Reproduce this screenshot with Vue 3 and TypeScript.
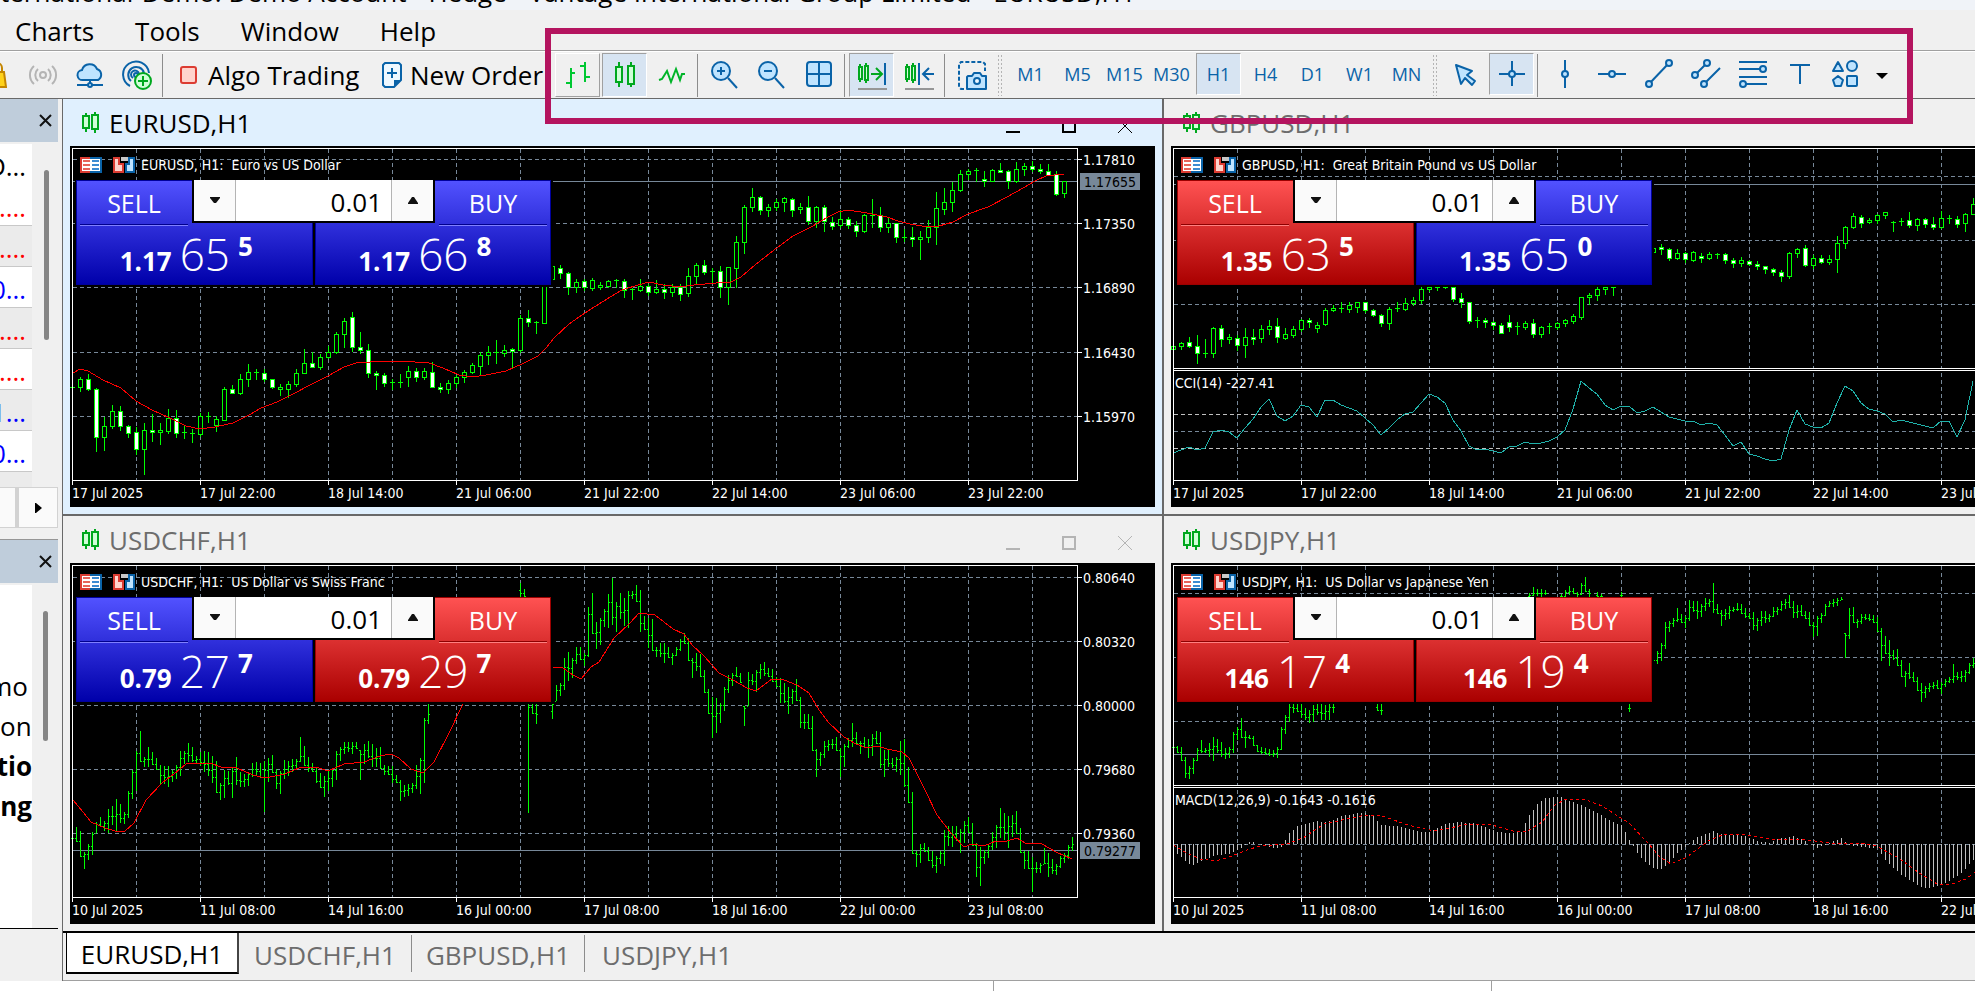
<script setup lang="ts">
import { ref } from 'vue'

type Tone = 'up' | 'down'
interface Quote { base: string; pips: string; point: string; tone: Tone }
interface Candle { x: number; high: number; top: number; bottom: number; low: number; falling: boolean }
interface Level { y: number; label: string }
interface ChartWindow {
  symbol: string
  caption: string
  active: boolean
  controls: boolean
  sell: Quote
  buy: Quote
  grid: Level[]
  priceY: number
  priceLabel: string
  dates: string[]
  split: number
  candles: Candle[]
  bars: string
  average: string
  indicator: string
  indicatorKind: '' | 'cci' | 'macd'
  indicatorY: number
  curve: string
  histogram: string
}

const volume = ref<Record<string, string>>({ EURUSD: '0.01', GBPUSD: '0.01', USDCHF: '0.01', USDJPY: '0.01' })

/* Each candle is "high top bottom low", followed by d for a falling one. */
function candles(text: string, start = 0): Candle[] {
  return text.trim().split(/\s*,\s*/).map((item, i) => {
    const p = item.split(' ')
    return { x: 2 + (start + i) * 8, high: +p[0], top: +p[1], bottom: +p[2], low: +p[3], falling: p[4] === 'd' }
  })
}

/* Groups of "index:high low,high low" become vertical bars with open and close ticks. */
function bars(text: string): string {
  let path = ''
  for (const group of text.trim().split(/\s*;\s*/)) {
    const [start, list] = group.split(':')
    const pairs = list.split(',').map(p => p.trim().split(' ').map(Number))
    let close = Math.round((pairs[0][0] + pairs[0][1]) / 2)
    pairs.forEach(([high, low], i) => {
      const x = 2 + (Number(start) + i) * 4
      const open = Math.min(Math.max(close, high), low)
      const next = pairs[i + 1] ?? pairs[i]
      close = Math.min(Math.max(Math.round((next[0] + next[1]) / 2), high + 2), low - 1)
      path += `M${x}.5 ${high}V${low}M${x - 1} ${open}.5H${x}M${x + 1} ${close}.5H${x + 2}`
    })
  }
  return path
}

/* Vertical strokes from the zero line, interpolated between "index y" pairs. */
function histogram(text: string, zero: number): string {
  const keys = text.trim().split(/\s*,\s*/).map(p => p.split(' ').map(Number))
  let path = ''
  for (let k = 0; k < keys.length - 1; k++) {
    const [a, ya] = keys[k]
    const [b, yb] = keys[k + 1]
    for (let i = a; i < b; i++) {
      const y = Math.round(ya + ((yb - ya) * (i - a)) / (b - a))
      if (y !== zero) path += `M${2 + i * 4}.5 ${zero}V${y}`
    }
  }
  return path
}

const eurusd = candles(`240 241 242 242,231 233 241 245,228 233 243 244 d,242 243 291 305 d,271 280 291 304,259 265 280 282,260 265 280 284 d,279 280 287 291 d,281 286 303 308 d,277 284 303 328,268 284 286 295 d,277 284 286 298,263 272 285 287,264 272 287 291 d,280 286 287 292,283 287 288 296,267 270 288 290,266 270 271 276,270 273 279 285,241 243 274 274,239 243 247 247 d,228 233 247 248,218 226 233 240,223 226 227 233,223 227 233 235 d,233 233 241 242 d,238 241 243 249,235 238 243 251,223 227 238 240,203 217 227 227,206 217 221 221 d,208 211 221 223,200 206 211 212,186 188 206 207,172 175 188 201,166 171 201 205 d,186 201 204 207 d,198 204 227 231 d,225 227 229 243 d,227 229 237 240 d,233 236 237 243,228 236 237 241,220 225 231 240,222 225 231 235 d,222 225 231 233,216 226 241 241 d,237 241 243 246 d,234 237 243 247,229 231 237 241,224 226 231 236,217 219 226 227,206 209 220 228,200 206 209 218,194 206 207 217,199 204 207 210,202 203 205 221 d,169 172 204 206,164 172 176 180 d,175 176 177 187,137 137 177 177,120 120 133 134,119 122 127 132 d,126 127 141 148 d,133 136 141 146,133 135 141 144 d,132 134 142 144,136 139 141 143,134 135 140 141,133 134 135 141,133 135 144 151 d,142 143 144 153,133 140 144 145,138 140 146 149 d,134 143 146 147,138 143 146 152 d,138 141 146 150,138 141 148 154 d,122 130 147 150,117 119 130 137,114 119 126 128 d,122 125 126 136,120 125 141 151 d,121 121 141 158,90 96 122 141,59 61 96 107,42 51 61 65,50 51 64 68 d,58 61 64 70,53 56 61 64,51 52 56 65,52 53 64 70 d,57 61 63 67,50 61 75 78 d,60 61 75 81,59 61 75 85 d,71 76 80 83 d,64 73 79 81,71 73 79 82 d,75 79 85 90 d,68 69 85 86,53 69 70 81,61 69 81 85 d,71 77 81 86,77 77 91 96 d,83 91 92 95,81 91 93 100 d,85 91 93 113,74 81 91 96,46 62 81 98,42 56 63 68,36 44 56 65,24 28 44 45,23 25 28 33,22 24 25 35,25 33 35 40 d,23 24 35 35,17 24 26 26 d,24 25 35 42 d,16 23 35 36,17 20 23 29,15 20 23 25 d,18 23 25 27 d,18 25 29 29 d,25 28 48 49 d,35 35 47 51`)

const gbpusd = candles(`199 200 203 203,196 197 200 203,191 196 200 201 d,189 200 207 217 d,193 207 208 211,181 182 207 211,179 182 193 200 d,188 191 193 197,189 192 199 204 d,182 191 199 211,183 191 193 198 d,179 183 192 196,174 180 183 188,172 180 191 196 d,182 188 192 193,180 183 189 191,173 174 183 185,172 174 176 181 d,176 179 182 186,162 164 178 179,159 162 164 165,156 162 163 166,156 159 163 166,156 156 161 166,156 156 164 166 d,163 164 169 170 d,168 169 177 180 d,161 163 177 183,156 162 163 165,152 157 163 164,151 154 157 159,141 143 154 157,140 141 143 145,137 139 141 144,134 136 141 142,139 141 153 155 d,147 152 156 161 d,156 156 175 177 d,171 174 175 181,172 174 176 181 d,175 176 179 183 d,177 179 187 187 d,169 176 181 185 d,176 180 181 188,175 177 181 183,173 177 188 191 d,180 181 188 191,177 180 181 187,176 177 181 183,173 174 177 180,168 170 175 177,151 151 171 173,147 149 151 158,141 143 149 154,141 141 143 148,137 139 141 149,120 124 139 140,110 116 124 130,106 108 116 120,102 104 108 111,102 102 106 107,98 101 103 108 d,102 103 112 114 d,103 107 112 113,106 107 113 116 d,105 106 114 115,107 110 112 116 d,106 108 112 113,107 108 109 112,107 108 114 117 d,112 114 117 121 d,111 114 117 120,114 115 118 119 d,115 118 120 123 d,120 120 123 127 d,122 123 126 129 d,124 126 130 135 d,106 107 130 132,102 103 107 111,99 102 119 120 d,109 112 119 122,109 112 116 117 d,109 113 116 118,90 97 113 126,80 81 97 102,67 70 81 82,69 71 77 81 d,72 74 76 77,68 69 74 77,66 66 69 72,75 76 77 85,72 75 76 79,66 74 79 81 d,72 73 79 84,72 73 78 81 d,71 78 81 83 d,65 72 81 82,69 72 73 77,70 73 78 81 d,67 68 77 85,52 58 68 68`)

const usdchf = bars(`0:273 276,264 279,268 294,289 306,281 297,269 292,259 270,254 264,258 268,246 270,243 262,236 269,241 260,249 261,228 255,207 236,188 228,168 199,194 204,184 204,189 202,195 207,202 221,203 221,203 224,207 219,202 216,188 213,188 201,180 199,184 199,193 200,189 203,188 209,189 213,193 220,198 230,220 237,207 235,208 222,204 235,194 222,209 224,211 224,209 223,200 214,199 212,200 215,198 249,195 219,192 210,206 226,208 231,197 216,198 213,196 209,196 207,174 199,183 203,194 209,200 209,205 220,210 225,213 234,207 228,205 224,188 217,184 198,179 191,179 189,179 191,179 186,187 217,181 201,178 195,181 204,185 204,184 206,202 212,203 212,203 220,212 220,217 238,222 234,221 233,220 230,202 226,195 231,155 220,140 161;112:20 34,26 34,137 250,137 151,140 161;120:139 156,122 138,120 133,95 127,89 118,95 115,84 101,84 97,90 103,44 94,30 71,59 86,55 82,46 64,31 65,15 62,39 69,30 56,35 63,28 65,28 36,22 39,27 69,53 67,55 85,56 88,84 94,80 94,80 100,84 95,90 102,84 93,76 88,70 81,75 98,95 115,90 108,91 114,107 130,126 151,134 175,135 170,140 160,124 148,112 130,110 123,104 114,110 120,143 163,109 143,111 122,107 129,101 116,99 113,105 114,106 119,114 124,115 140,120 140,124 151,126 141,116 138,134 165,151 166,151 166,153 188,186 214,189 203,178 195,177 188,176 186,174 188,185 214,181 204,175 185,160 184,169 181,178 191,174 185,176 195,171 193,168 181,169 205,187 214,187 204,195 205,194 209,178 212,176 224,204 240,229 291,288 304,281 300,280 289,284 298,288 305,293 310,288 301,267 303,263 283,263 284,263 278,266 290,258 280,254 270,260 283,280 314,284 323,287 301,281 295,269 287,262 285,245 275,250 277,253 285,252 274,248 271,265 290,288 306,288 306,294 329,299 310,300 310,285 301,290 314,296 311,301 312,293 305,290 300,282 296,274 288`)

const usdjpy = bars(`0:183 185,183 190,184 198,194 215,203 216,195 211,185 198,177 190,185 190,180 194,174 198,176 190,179 194,185 196,184 195,169 190,164 177,155 175,168 185,172 176,173 183,182 189,184 191,185 192,186 193,187 194,184 195,164 187,152 171,140 159,137 150,140 149,141 155,145 157,147 160,142 159,140 152,140 157,142 157,139 157,137 150;51:140 148,141 152;89:30 35,24 33,26 33,26 34,27 32;97:31 34,27 34,23 32,25 31,29 34,20 32,14 29,26 34;106:29 34,31 34;112:29 35;114:140 149;120:95 99,88 101,80 98,59 86,58 69,55 64,45 59,51 60,53 65,37 58,38 49,38 56,41 54,35 48,36 44,20 50,41 51,47 63,46 57,43 56,44 49,40 48,41 51,45 55,50 56,49 67,55 68,48 63,48 60,51 59,44 54,44 52,38 48,36 46,32 45,38 55,42 55,42 53,48 56,49 63,59 74,53 73,50 60,41 53,38 44,36 44,35 43,34 37,70 95,45 76,44 60,56 65,51 61,51 57,51 58,52 60,54 69,65 98,73 91,77 103,87 97,86 103,97 114,108 124,100 116,109 119,114 128,120 139,123 135,120 129,119 126,117 126,119 131,116 124,114 120,101 120,109 117,108 119,107 119,100 111,95 105`)

const eurAverage = '3,227 10,223 18,225 33,234 51,242 66,255 82,264 100,272 116,280 130,283 145,281 163,277 179,269 191,262 207,256 223,248 242,238 258,230 274,221 286,217 300,216 317,215 345,216 359,217 373,222 389,229 403,231 416,229 436,225 452,218 468,210 476,202 484,192 499,178 509,171 521,163 537,153 552,144 568,139 579,136 593,139 611,141 624,139 646,137 661,136 671,131 685,119 704,104 723,90 743,80 758,71 768,66 778,64 797,67 817,71 828,75 840,78 858,81 869,80 883,76 898,68 918,61 937,51 953,42 965,35 976,30 994,28'
const chfAverage = '3,237 13,249 21,259 35,265 45,268 55,268 64,260 76,237 92,220 104,211 116,201 140,200 151,204 167,205 183,212 195,215 215,211 231,204 246,204 258,208 274,201 294,199 310,193 321,191 329,195 341,206 353,210 364,199 379,170 393,141 430,100 482,104 493,105 503,112 511,116 521,104 529,99 544,75 560,60 569,50 585,52 603,66 614,71 622,82 634,93 649,110 663,117 677,125 686,128 702,116 714,117 727,122 739,130 749,147 758,159 774,174 786,181 797,185 807,183 817,186 832,189 839,195 856,229 867,252 881,270 894,284 902,281 914,283 926,278 937,278 947,275 955,280 972,281 986,289 1002,296'
const cci = [307, 304, 301, 304, 302, 286, 284, 286, 292, 282, 273, 261, 253, 270, 275, 270, 259, 261, 271, 254, 254, 259, 262, 265, 272, 279, 289, 282, 274, 268, 266, 257, 248, 251, 257, 274, 285, 300, 304, 303, 305, 307, 301, 300, 296, 298, 297, 295, 291, 284, 263, 235, 242, 248, 259, 264, 260, 260, 267, 265, 261, 266, 271, 273, 275, 275, 279, 277, 279, 289, 300, 296, 308, 310, 313, 315, 313, 284, 264, 278, 281, 282, 277, 257, 240, 245, 257, 263, 265, 268, 276, 274, 276, 278, 280, 282, 275, 275, 291, 274, 235]
  .map((y, i) => `${2 + i * 8},${y}`).join(' ')
const signal = '2,282 16,290 29,296 45,298 58,294 76,287 89,283 116,281 132,275 153,261 176,256 195,252 211,253 237,262 263,268 279,265 297,261 321,262 342,268 355,269 371,259 384,242 395,236 413,236 431,243 458,260 476,279 489,294 500,301 516,294 537,278 553,271 576,272 605,277 629,276 658,280 689,280 705,283 726,294 747,309 766,321 781,321 795,316 804,309'
const macd = histogram('0 281,1 291,4 301,5 302,8 296,11 292,14 291,16 287,18 282,19 279,20 279,22 282,25 285,27 284,28 277,29 270,31 263,34 260,36 258,38 259,40 257,42 253,46 250,48 250,50 253,52 262,56 263,62 269,64 269,68 261,71 259,75 260,78 264,81 269,84 270,87 269,88 260,89 252,91 241,93 235,95 234,97 234,99 238,102 242,106 250,110 259,112 262,113 269,114 277,115 283,116 290,118 299,120 305,122 306,124 300,126 290,128 284,129 280,131 274,135 268,137 271,143 273,146 278,149 280,151 276,155 273,158 278,160 283,161 285,164 280,167 275,169 282,172 284,176 285,178 297,182 312,187 324,189 325,193 320,197 310,200 297,202 290', 281)

const julyDates = ['17 Jul 2025', '17 Jul 22:00', '18 Jul 14:00', '21 Jul 06:00', '21 Jul 22:00', '22 Jul 14:00', '23 Jul 06:00', '23 Jul 22:00']
const longDates = ['10 Jul 2025', '11 Jul 08:00', '14 Jul 16:00', '16 Jul 00:00', '17 Jul 08:00', '18 Jul 16:00', '22 Jul 00:00', '23 Jul 08:00']

const windows: ChartWindow[] = [
  {
    symbol: 'EURUSD', caption: 'EURUSD, H1:  Euro vs US Dollar', active: true, controls: true,
    sell: { base: '1.17', pips: '65', point: '5', tone: 'up' }, buy: { base: '1.17', pips: '66', point: '8', tone: 'up' },
    grid: [{ y: 13, label: '1.17810' }, { y: 77, label: '1.17350' }, { y: 141, label: '1.16890' }, { y: 206, label: '1.16430' }, { y: 270, label: '1.15970' }],
    priceY: 35, priceLabel: '1.17655', dates: julyDates, split: 0, candles: eurusd, bars: '', average: eurAverage,
    indicator: '', indicatorKind: '', indicatorY: 0, curve: '', histogram: '',
  },
  {
    symbol: 'GBPUSD', caption: 'GBPUSD, H1:  Great Britain Pound vs US Dollar', active: false, controls: false,
    sell: { base: '1.35', pips: '63', point: '5', tone: 'down' }, buy: { base: '1.35', pips: '65', point: '0', tone: 'up' },
    grid: [{ y: 30, label: '' }, { y: 94, label: '' }, { y: 158, label: '' }],
    priceY: 38, priceLabel: '', dates: julyDates.slice(0, 7), split: 222, candles: gbpusd, bars: '', average: '',
    indicator: 'CCI(14) -227.41', indicatorKind: 'cci', indicatorY: 242, curve: cci, histogram: '',
  },
  {
    symbol: 'USDCHF', caption: 'USDCHF, H1:  US Dollar vs Swiss Franc', active: false, controls: true,
    sell: { base: '0.79', pips: '27', point: '7', tone: 'up' }, buy: { base: '0.79', pips: '29', point: '7', tone: 'down' },
    grid: [{ y: 14, label: '0.80640' }, { y: 78, label: '0.80320' }, { y: 142, label: '0.80000' }, { y: 206, label: '0.79680' }, { y: 270, label: '0.79360' }],
    priceY: 287, priceLabel: '0.79277', dates: longDates, split: 0, candles: [], bars: usdchf, average: chfAverage,
    indicator: '', indicatorKind: '', indicatorY: 0, curve: '', histogram: '',
  },
  {
    symbol: 'USDJPY', caption: 'USDJPY, H1:  US Dollar vs Japanese Yen', active: false, controls: false,
    sell: { base: '146', pips: '17', point: '4', tone: 'down' }, buy: { base: '146', pips: '19', point: '4', tone: 'down' },
    grid: [{ y: 30, label: '' }, { y: 94, label: '' }, { y: 158, label: '' }],
    priceY: 191, priceLabel: '', dates: longDates.slice(0, 7), split: 222, candles: [], bars: usdjpy, average: '',
    indicator: 'MACD(12,26,9) -0.1643 -0.1616', indicatorKind: 'macd', indicatorY: 242, curve: signal, histogram: macd,
  },
]

const columns = Array.from({ length: 15 }, (_, i) => 66 + i * 64)
const menus = ['Charts', 'Tools', 'Window', 'Help']
const frames = ['M1', 'M5', 'M15', 'M30', 'H1', 'H4', 'D1', 'W1', 'MN']
const tabs = ['EURUSD,H1', 'USDCHF,H1', 'GBPUSD,H1', 'USDJPY,H1']
const activeTab = ref('EURUSD,H1')
const frame = ref('H1')

const rates = [
  { text: 'D…', tone: 'plain', shaded: false },
  { text: '0.…', tone: 'red', shaded: false },
  { text: '0.…', tone: 'red', shaded: true },
  { text: '0…', tone: 'blue', shaded: false },
  { text: '0.…', tone: 'red', shaded: true },
  { text: '0.…', tone: 'red', shaded: false },
  { text: '1…', tone: 'blue', shaded: true },
  { text: '0…', tone: 'blue', shaded: false },
  { text: '', tone: 'blue', shaded: true },
]
</script>

<template>
  <div class="terminal">
    <header class="caption-bar"><span>ternational-Demo: Demo Account - Hedge - Vantage International Group Limited - EURUSD,H1</span></header>

    <nav class="menu" aria-label="Menu">
      <button v-for="m in menus" :key="m" type="button">{{ m }}</button>
    </nav>

    <div class="toolbar" role="toolbar" aria-label="Chart tools">
      <button class="tool bag" type="button" aria-label="Market">
        <svg width="20" height="32" viewBox="0 0 20 32"><path d="M5 13V9a5 5 0 0 1 10 0v4" fill="none" stroke="#c48600" stroke-width="2" /><path d="M2 13h15l2 15H1z" fill="#ffd21a" stroke="#c48600" stroke-width="2" /></svg>
      </button>
      <button class="tool" type="button" aria-label="Signals">
        <svg class="icon" viewBox="0 0 32 32"><g fill="none" stroke="#b4b4b4" stroke-width="2"><circle cx="16" cy="16" r="3" /><path d="M11 10a8 8 0 0 0 0 12M21 10a8 8 0 0 1 0 12M7 7a12 12 0 0 0 0 18M25 7a12 12 0 0 1 0 18" /></g></svg>
      </button>
      <button class="tool" type="button" aria-label="Virtual hosting">
        <svg class="icon" viewBox="0 0 32 32"><g fill="#bfe4ff" stroke="#0a63a8" stroke-width="2"><path d="M9 21a5 5 0 0 1-1-10 8 8 0 0 1 15-1 6 6 0 0 1 1 11z" /><path d="M3 26h26M16 21v3" fill="none" /><circle cx="16" cy="26" r="2" /></g></svg>
      </button>
      <button class="tool" type="button" aria-label="Subscribe">
        <svg class="icon" viewBox="0 0 32 32"><g fill="none" stroke="#0a63a8" stroke-width="2"><circle cx="15" cy="16" r="2" fill="#bfe4ff" /><path d="M9 27A13 13 0 1 1 28 14" /><path d="M10 22a8 8 0 1 1 13-8" /><path d="M12 19a4 4 0 1 1 6-4" /></g><circle cx="22" cy="22" r="8" fill="#d0ffd8" stroke="#00a81e" stroke-width="2" /><path d="M22 17v10M17 22h10" stroke="#00a81e" stroke-width="2" /></svg>
      </button>
      <i class="sep"></i>
      <button class="wide algo" type="button">
        <svg width="17" height="18" viewBox="0 0 17 18"><rect x="1" y="1" width="15" height="16" rx="2" fill="#ffd3cc" stroke="#dc3c32" stroke-width="2" /></svg>
        <span>Algo Trading</span>
      </button>
      <button class="wide order" type="button">
        <svg width="20" height="28" viewBox="0 0 20 28"><path d="M3 2h14l2 2v15l-7 7H3l-2-2V4z" fill="#eef8ff" stroke="#0a63a8" stroke-width="2" stroke-linejoin="round" /><path d="M12 26v-7h7z" fill="#0a63a8" /><path d="M10 7v10M5 12h10" stroke="#0a63a8" stroke-width="2" /></svg>
        <span>New Order</span>
      </button>
      <i class="sep"></i>

      <button class="tool raised" type="button" aria-label="Bar chart">
        <svg class="icon" viewBox="0 0 32 32"><path d="M9 9v20M4 24h5M9 14h4M23 3v20M18 7h5M23 18h5" fill="none" stroke="#00c832" stroke-width="2" /></svg>
      </button>
      <button class="tool pressed" type="button" aria-label="Candlesticks">
        <svg class="icon" viewBox="0 0 32 32"><path d="M10 3v25M22 3v25" stroke="#00a81e" stroke-width="2" /><g fill="#d0ffd8" stroke="#00a81e" stroke-width="2"><rect x="7" y="8" width="6" height="15" /><rect x="19" y="7" width="6" height="18" /></g></svg>
      </button>
      <button class="tool" type="button" aria-label="Line chart">
        <svg class="icon" viewBox="0 0 32 32"><path d="M3 21l3-1 5-8 4 11 5-13 4 11 2-6h3" fill="none" stroke="#00b428" stroke-width="2" /></svg>
      </button>
      <i class="sep"></i>
      <button v-for="sign in ['in', 'out']" :key="sign" class="tool" type="button" :aria-label="`Zoom ${sign}`">
        <svg class="icon" viewBox="0 0 32 32"><g fill="none" stroke="#0a63a8" stroke-width="2"><path d="M19 19l9 10" /><circle cx="12" cy="12" r="9" fill="#bfe4ff" /><path d="M8 12h8" /><path v-if="sign === 'in'" d="M12 8v8" /></g></svg>
      </button>
      <button class="tool" type="button" aria-label="Tile windows">
        <svg class="icon" viewBox="0 0 32 32"><g fill="#bfe4ff" stroke="#0a63a8" stroke-width="2"><rect x="4" y="3" width="24" height="24" rx="3" /><path d="M16 3v24M4 15h24" /></g></svg>
      </button>
      <i class="sep"></i>
      <button class="tool pressed" type="button" aria-label="Auto scroll">
        <svg class="icon" viewBox="0 0 32 32"><g fill="#d0ffd8" stroke="#00a81e" stroke-width="2"><path d="M4 5v18M10 4v20" /><rect x="3" y="8" width="3" height="12" /><rect x="9" y="7" width="3" height="14" /><path d="M15 15h10M20 9l6 6-6 6" fill="none" /></g><path d="M29 4v22" stroke="#0a63a8" stroke-width="2" /><path d="M2 30h29" stroke="#969696" stroke-width="2" /></svg>
      </button>
      <button class="tool" type="button" aria-label="Chart shift">
        <svg class="icon" viewBox="0 0 32 32"><g fill="#d0ffd8" stroke="#00a81e" stroke-width="2"><path d="M4 5v18M10 4v20" /><rect x="3" y="8" width="3" height="12" /><rect x="9" y="7" width="3" height="14" /></g><path d="M16 4v22M31 15H21M26 9l-6 6 6 6" fill="none" stroke="#0a63a8" stroke-width="2" /><path d="M2 30h29" stroke="#969696" stroke-width="2" /></svg>
      </button>
      <i class="sep"></i>
      <button class="tool" type="button" aria-label="Save picture">
        <svg class="icon" viewBox="0 0 32 32"><path d="M8 30H5l-2-2V5l2-2h22l2 2v7" fill="none" stroke="#0a63a8" stroke-width="2" stroke-dasharray="4 2" /><path d="M12 17h4l2-3h6l2 3h4v13H11V18z" fill="#bfe4ff" stroke="#0a63a8" stroke-width="2" stroke-linejoin="round" /><circle cx="21" cy="22" r="3" fill="#eef8ff" stroke="#0a63a8" stroke-width="2" /></svg>
      </button>
      <i class="grip first"></i>

      <button v-for="f in frames" :key="f" class="tool frame" :class="{ pressed: f === frame }" type="button" @click="frame = f">{{ f }}</button>
      <i class="grip"></i>

      <button class="tool" type="button" aria-label="Cursor">
        <svg class="icon" viewBox="0 0 32 32"><path d="M7 6l16 6-5 4 8 6-3 4-7-7-4 6z" fill="#bfe4ff" stroke="#0a63a8" stroke-width="2" stroke-linejoin="round" /></svg>
      </button>
      <button class="tool frame pressed" type="button" aria-label="Crosshair">
        <svg class="icon" viewBox="0 0 32 32"><path d="M16 3v25M3 16h26" stroke="#0a63a8" stroke-width="2" /><circle cx="16" cy="16" r="3" fill="#bfe4ff" stroke="#0a63a8" stroke-width="2" /></svg>
      </button>
      <i class="sep"></i>
      <button class="tool" type="button" aria-label="Vertical line">
        <svg class="icon" viewBox="0 0 32 32"><path d="M16 1v28" stroke="#0a63a8" stroke-width="2" /><circle cx="16" cy="15" r="3" fill="#bfe4ff" stroke="#0a63a8" stroke-width="2" /></svg>
      </button>
      <button class="tool" type="button" aria-label="Horizontal line">
        <svg class="icon" viewBox="0 0 32 32"><path d="M2 15h28" stroke="#0a63a8" stroke-width="2" /><circle cx="16" cy="15" r="3" fill="#bfe4ff" stroke="#0a63a8" stroke-width="2" /></svg>
      </button>
      <button class="tool" type="button" aria-label="Trendline">
        <svg class="icon" viewBox="0 0 32 32"><g fill="#bfe4ff" stroke="#0a63a8" stroke-width="2"><path d="M6 25L26 4" /><circle cx="6" cy="25" r="3" /><circle cx="26" cy="4" r="3" /></g></svg>
      </button>
      <button class="tool" type="button" aria-label="Equidistant channel">
        <svg class="icon" viewBox="0 0 32 32"><g fill="#bfe4ff" stroke="#0a63a8" stroke-width="2"><path d="M5 16L17 4M14 25L30 9" /><circle cx="17" cy="4" r="3" /><circle cx="5" cy="16" r="3" /><circle cx="14" cy="25" r="3" /></g></svg>
      </button>
      <button class="tool" type="button" aria-label="Fibonacci retracement">
        <svg class="icon" viewBox="0 0 32 32"><g fill="#bfe4ff" stroke="#0a63a8" stroke-width="2"><path d="M2 3h28M2 10h22M2 18h28M8 25h22" /><circle cx="26" cy="10" r="3" /><circle cx="6" cy="25" r="3" /></g></svg>
      </button>
      <button class="tool" type="button" aria-label="Text">
        <svg class="icon" viewBox="0 0 32 32"><path d="M6 6h20M16 6v19" stroke="#0a63a8" stroke-width="2" /></svg>
      </button>
      <button class="tool" type="button" aria-label="Shapes">
        <svg class="icon" viewBox="0 0 32 32"><g fill="#bfe4ff" stroke="#0a63a8" stroke-width="2" stroke-linejoin="round"><path d="M7 3l5 9H2z" /><circle cx="21" cy="7" r="5" /><path d="M7 17l5 4-2 6H4l-2-6z" /><rect x="16" y="17" width="10" height="10" rx="1" /></g></svg>
      </button>
      <button class="more" type="button" aria-label="More tools"><svg width="12" height="7" viewBox="0 0 12 7"><path d="M0 0h12L6 6z" /></svg></button>
    </div>

    <div class="body">
      <aside class="side">
        <section class="pane quotes">
          <div class="pane-head">
            <button type="button" aria-label="Close Market Watch"><svg width="13" height="13" viewBox="0 0 13 13"><path d="M1 1l11 11M12 1L1 12" stroke="#111" stroke-width="2" /></svg></button>
          </div>
          <div class="pane-body">
            <ul class="rates">
              <li v-for="(r, i) in rates" :key="i" :class="[r.tone, { shaded: r.shaded }]">{{ r.text }}</li>
            </ul>
            <div class="track"><i class="thumb"></i></div>
          </div>
          <div class="hscroll">
            <span class="rail"></span>
            <button type="button" aria-label="Scroll right"><svg width="7" height="10" viewBox="0 0 7 10"><path d="M0 0h1l6 5-6 5H0z" /></svg></button>
          </div>
        </section>
        <section class="pane navigator">
          <div class="pane-head">
            <button type="button" aria-label="Close Navigator"><svg width="13" height="13" viewBox="0 0 13 13"><path d="M1 1l11 11M12 1L1 12" stroke="#111" stroke-width="2" /></svg></button>
          </div>
          <div class="pane-body">
            <ul class="tree">
              <li class="inset">mo</li>
              <li class="lead">ona</li>
              <li class="strong">tio</li>
              <li class="strong">eng</li>
            </ul>
            <div class="track"><i class="thumb"></i></div>
          </div>
        </section>
      </aside>

      <main class="workspace">
        <div class="windows">
          <section v-for="w in windows" :key="w.symbol" class="window" :class="{ active: w.active }">
            <header class="window-head">
              <svg width="18" height="21" viewBox="0 0 18 21"><path d="M4 1v19M13 0v21" stroke="#00a81e" stroke-width="2" /><g fill="#d0ffd8" stroke="#00a81e" stroke-width="2"><rect x="1" y="4" width="6" height="12" /><rect x="10" y="3" width="6" height="14" /></g></svg>
              <h2>{{ w.symbol }},H1</h2>
              <div v-if="w.controls" class="window-buttons">
                <button type="button" aria-label="Minimize"><svg width="14" height="14" viewBox="0 0 14 14"><path d="M0 13h14" /></svg></button>
                <button type="button" aria-label="Maximize"><svg width="14" height="14" viewBox="0 0 14 14"><path d="M1 1h12v12H1z" /></svg></button>
                <button type="button" aria-label="Close"><svg width="14" height="14" viewBox="0 0 14 14"><path class="thin" d="M0 0l14 14M14 0L0 14" /></svg></button>
              </div>
            </header>

            <div class="chart">
              <svg class="plot" width="1085" height="361" viewBox="0 0 1085 361" role="img" :aria-label="w.caption">
                <g class="grid">
                  <path v-for="x in columns" :key="x" :d="`M${x}.5 3V334`" />
                  <path v-for="g in w.grid" :key="g.y" :d="`M3 ${g.y}.5H1007`" />
                </g>
                <path class="price-line" :d="`M3 ${w.priceY}.5H1007`" />

                <g v-if="w.candles.length" class="candles">
                  <template v-for="c in w.candles" :key="c.x">
                    <path :d="`M${c.x}.5 ${c.high}V${c.low + 1}`" />
                    <path v-if="c.bottom - c.top < 2" :d="`M${c.x - 2} ${c.top}.5h5`" />
                    <rect v-else :class="{ falling: c.falling }" :x="c.x - 1.5" :y="c.top + 0.5" width="4" :height="c.bottom - c.top" />
                  </template>
                </g>
                <path v-if="w.bars" class="bars" :d="w.bars" />
                <polyline v-if="w.average" class="average" :points="w.average" />

                <g v-if="w.indicatorKind === 'cci'">
                  <path class="level" d="M3 268.5H1007M3 302.5H1007" />
                  <path class="level dim" d="M3 285.5H1007" />
                  <polyline class="cci" :points="w.curve" />
                </g>
                <g v-if="w.indicatorKind === 'macd'">
                  <path class="level dim" d="M3 281.5H1007" />
                  <path class="histogram" :d="w.histogram" />
                  <polyline class="signal" :points="w.curve" />
                </g>

                <path v-if="w.split" class="gap" :d="`M0 ${w.split + 1}.5H1085`" />
                <path v-if="w.split" class="frame-line" :d="`M2.5 ${w.split}.5H1007M2.5 ${w.split + 2}.5H1007`" />
                <path class="frame-line" d="M2.5 339V2.5H1007.5V334.5H2" />
                <template v-for="(d, i) in w.dates" :key="d">
                  <path class="frame-line" :d="`M${2 + i * 128}.5 334v5`" />
                  <text :x="2 + i * 128" y="352">{{ d }}</text>
                </template>
                <template v-for="g in w.grid" :key="g.y">
                  <path v-if="g.label" class="frame-line" :d="`M1007 ${g.y}.5h5`" />
                  <text v-if="g.label" x="1013" :y="g.y + 6">{{ g.label }}</text>
                </template>
                <template v-if="w.priceLabel">
                  <rect class="price-tag" x="1010" :y="w.priceY - 8" width="60" height="17" />
                  <text class="price-text" x="1014" :y="w.priceY + 6">{{ w.priceLabel }}</text>
                </template>

                <g transform="translate(10 11)">
                  <path d="M11 1H1v14h10z" fill="#fff" stroke="#dc3c32" stroke-width="2" />
                  <path d="M11 1h10v14H11z" fill="#fff" stroke="#0a63a8" stroke-width="2" />
                  <rect x="10" y="2" width="2" height="12" fill="#fff" />
                  <path d="M3 4h7M3 8h7M3 12h7" stroke="#e8645a" stroke-width="2" />
                  <path d="M12 4h7M12 8h7M12 12h7" stroke="#3c8cd2" stroke-width="2" />
                </g>
                <g transform="translate(43 11)">
                  <path d="M1 1h5v6h4v8H1z" fill="#ffd3cc" stroke="#dc3c32" stroke-width="2" />
                  <path d="M21 1h-5v6h-3v8h8z" fill="#bfe4ff" stroke="#0a63a8" stroke-width="2" />
                  <rect x="8" y="0" width="7" height="4" rx="1" fill="#c8c8c8" />
                </g>
                <text x="71" y="24">{{ w.caption }}</text>
                <text v-if="w.indicator" x="4" :y="w.indicatorY">{{ w.indicator }}</text>
              </svg>

              <div class="ticket">
                <button type="button" class="deal" :class="w.sell.tone">
                  <span class="deal-label">SELL</span>
                  <span class="deal-price"><b>{{ w.sell.base }}</b><span class="pips">{{ w.sell.pips }}</span><b class="point">{{ w.sell.point }}</b></span>
                </button>
                <button type="button" class="deal buy" :class="w.buy.tone">
                  <span class="deal-label">BUY</span>
                  <span class="deal-price"><b>{{ w.buy.base }}</b><span class="pips">{{ w.buy.pips }}</span><b class="point">{{ w.buy.point }}</b></span>
                </button>
                <div class="volume">
                  <button type="button" aria-label="Decrease volume"><svg width="10" height="7" viewBox="0 0 10 7"><path d="M0 0h10v1L6 6H4L0 1z" /></svg></button>
                  <input v-model="volume[w.symbol]" type="text" :aria-label="`${w.symbol} volume`">
                  <button type="button" aria-label="Increase volume"><svg width="10" height="7" viewBox="0 0 10 7"><path d="M0 7h10V6L6 0H4L0 6z" /></svg></button>
                </div>
              </div>
            </div>
          </section>
        </div>

        <nav class="tabs" aria-label="Open charts">
          <button v-for="t in tabs" :key="t" type="button" :class="{ current: t === activeTab }" @click="activeTab = t">{{ t }}</button>
        </nav>
      </main>
    </div>

    <footer class="status"><span></span><span></span><span></span></footer>
    <div class="highlight" aria-hidden="true"></div>
  </div>
</template>

<style>
body { margin: 0; background: #fff; overflow-x: hidden; }
</style>

<style scoped>
.terminal {
  position: relative;
  background: #f0f0f0;
  color: #000;
  font: 26px/34px "Open Sans", "Noto Sans", sans-serif;
  overflow: hidden;
}
button { margin: 0; padding: 0; border: 0; background: none; color: inherit; font: inherit; }
ul, h2 { margin: 0; padding: 0; list-style: none; font: inherit; }
svg { display: block; flex: none; }

.caption-bar {
  display: flex;
  align-items: flex-end;
  height: 10px;
  background: #f0f3f8;
  line-height: 36px;
  white-space: nowrap;
}

.menu { display: flex; gap: 41px; height: 40px; padding: 0 15px; align-items: center; }
.menu button { height: 32px; line-height: 34px; }

.toolbar {
  display: flex;
  align-items: flex-start;
  height: 46px;
  padding-top: 1px;
  border-top: 1px solid #a0a0a0;
  border-bottom: 1px solid #696969;
  box-shadow: inset 0 1px #fff;
  white-space: nowrap;
}
.tool {
  display: flex;
  flex: none;
  align-items: center;
  justify-content: center;
  width: 45px;
  height: 44px;
  margin: 1px 1px 0;
  box-sizing: border-box;
}
.icon { width: 32px; height: 32px; }
.bag { width: 19px; margin: 1px 0 0; justify-content: flex-end; padding-right: 12px; overflow: hidden; }
.raised { border: 1px solid #fff; border-right-color: #a0a0a0; border-bottom-color: #a0a0a0; }
.pressed { background: #d7e4f2; border: 1px solid #a0a0a0; border-right-color: #fff; border-bottom-color: #fff; }
.frame { height: 42px; color: #0a63a8; font-size: 18px; }
.sep { flex: none; width: 1px; height: 43px; margin: 2px 3px 0 2px; background: #8c8c8c; }
.grip {
  flex: none;
  width: 5px;
  height: 42px;
  margin: 2px 4px 0 2px;
  background-image: radial-gradient(circle, #b4b4b4 1px, transparent 1px);
  background-size: 3px 4px;
}
.grip.first { margin-right: 5px; }
.wide { display: flex; flex: none; align-items: center; height: 46px; box-sizing: border-box; }
.algo { width: 201px; padding-left: 14px; gap: 11px; }
.order { width: 181px; padding-left: 15px; gap: 8px; }

.more { margin: 21px 0 0 6px; }

.body { display: flex; }
.side { flex: none; width: 62px; }
.pane-head {
  display: flex;
  align-items: center;
  justify-content: flex-end;
  width: 58px;
  height: 43px;
  padding-right: 6px;
  box-sizing: border-box;
  background: #bfcddb;
}
.pane-body { display: flex; height: 343px; margin-top: 2px; overflow: hidden; }
.rates, .tree { flex: none; width: 32px; background: #fff; overflow: hidden; white-space: nowrap; }
.rates li {
  display: flex;
  justify-content: flex-end;
  height: 40px;
  padding-right: 6px;
  line-height: 44px;
  border-bottom: 1px solid #c8c8c8;
}
.rates .plain { border-color: #fff; }
.rates .red { color: #f00; }
.rates .blue { color: #00f; }
.rates .shaded { background: #ebebeb; }
.track { display: flex; justify-content: center; width: 26px; padding-left: 1px; }
.thumb { width: 5px; height: 170px; margin-top: 26px; border-radius: 3px; background: #858585; }
.hscroll { display: flex; gap: 2px; height: 41px; width: 58px; background: #d2d2d2; }
.hscroll .rail, .hscroll button { box-sizing: border-box; border: 1px solid #d2d2d2; background: #fafafa; }
.hscroll .rail { width: 16px; border-left: 0; }
.hscroll button { display: flex; width: 40px; align-items: center; justify-content: center; }
.navigator { margin-top: 11px; border-bottom: 1px solid #000; width: 58px; }
.navigator .pane-head { border-top: 1px solid #969696; height: 44px; }
.tree { box-sizing: border-box; padding-top: 81px; }
.tree li { display: flex; justify-content: flex-end; height: 40px; line-height: 40px; }
.tree .inset { padding-right: 4px; }
.tree .lead { justify-content: flex-start; }
.tree .strong { font-weight: 700; }
.navigator .thumb { height: 130px; }

.workspace { flex: 1; min-width: 0; border-left: 1px solid #696969; }
.windows {
  display: grid;
  grid-template-columns: minmax(0, 1099fr) minmax(0, 811fr);
  gap: 2px;
  background: #696969;
  border-bottom: 2px solid #000;
}
.window { min-width: 0; height: 415px; padding: 0 7px; box-sizing: border-box; background: #f0f0f0; color: #6d6d6d; overflow: hidden; }
.window.active { background: #e0f0fe; color: #000; }
.window-head { display: flex; align-items: center; height: 47px; padding-left: 12px; }
.window-head h2 { margin-left: 9px; }
.window-buttons { display: flex; gap: 42px; margin: 6px 23px 0 auto; }
.window-buttons path { fill: none; stroke: #b4b4b4; stroke-width: 2; }
.window-buttons .thin { stroke-width: 1; }
.active .window-buttons path { stroke: #000; }
.chart { position: relative; height: 361px; background: #000; overflow: hidden; }
.window:nth-child(even) { padding-right: 0; }

.plot { shape-rendering: crispEdges; }
.plot polyline, .bars, .histogram, .frame-line { fill: none; }
.plot text { fill: #fff; font: 14px/14px "DejaVu Sans Condensed", "Open Sans", sans-serif; white-space: pre; }
.grid path { stroke: #778899; stroke-dasharray: 4 3; }
.price-line { stroke: #778899; }
.candles path, .candles rect { stroke: #0f0; fill: #000; }
.candles .falling { fill: #fff; }
.bars { stroke: #0f0; }
.average { stroke: #f00; }
.level { stroke: #c0c0c0; stroke-dasharray: 4 3; }
.level.dim { stroke: #778899; }
.cci { stroke: #20b2aa; }
.histogram { stroke: #c0c0c0; }
.signal { stroke: #f00; stroke-dasharray: 3 3; }
.gap { stroke: #000; }
.frame-line { stroke: #fff; }
.price-tag { fill: #778899; }
.plot .price-text { fill: #000; }

.ticket {
  position: absolute;
  top: 34px;
  left: 5px;
  display: grid;
  grid-template-columns: 1fr 1fr;
  gap: 2px;
  width: 475px;
  height: 105px;
  padding: 0 2px 2px 1px;
  box-sizing: content-box;
  background: #000;
}
.deal { display: flex; flex-direction: column; border: 1px solid #00009c; color: #fff; text-align: left; background: linear-gradient(#5252ff, #0000aa); }
.deal.down { border-color: #9c0000; background: linear-gradient(#ff5252, #aa0000); }
.deal-label {
  width: 108px;
  height: 43px;
  line-height: 45px;
  margin-left: 3px;
  font-size: 25px;
  text-align: center;
  border-bottom: 1px solid #00008c;
  box-shadow: 0 1px #8080ff;
}
.down .deal-label { border-color: #8c0000; box-shadow: 0 1px #ff8080; }
.buy .deal-label { align-self: flex-end; margin: 0 3px 0 0; }
.deal-price { display: flex; align-items: baseline; justify-content: center; align-self: stretch; height: 58px; line-height: 58px; gap: 8px; padding-right: 16px; }
.deal-price b { font-weight: 700; }
.pips { font-size: 44px; font-weight: 300; }
.point { align-self: flex-start; line-height: 42px; }
.volume { position: absolute; top: 0; left: 117px; display: flex; width: 239px; height: 41px; padding: 0 2px 2px; background: #000; }
.volume button { display: flex; flex: none; width: 41px; align-items: center; justify-content: center; background: #fafafa; }
.volume button path { fill: #111; }
.volume input {
  flex: 1;
  min-width: 0;
  padding: 2px 9px 0 0;
  border: 0;
  border-left: 1px solid #b4b4b4;
  border-right: 1px solid #b4b4b4;
  background: #fff;
  color: #000;
  font: 26px/34px "Open Sans", "Noto Sans", sans-serif;
  text-align: right;
}

.tabs { display: flex; height: 47px; padding-left: 3px; color: #6d6d6d; border-bottom: 1px solid #a0a0a0; }
.tabs button { width: 173px; height: 37px; margin-top: 2px; padding-top: 3px; box-sizing: border-box; border-right: 1px solid #8c8c8c; text-align: center; }
.tabs button:last-child { border-right: 0; width: 164px; }
.tabs .current { height: 41px; margin-top: 0; border: 1px solid #000; border-top: 0; border-right: 2px solid #444; border-bottom-width: 2px; background: #fff; color: #000; }

.status { display: flex; height: 10px; background: #fff; }
.status span { flex: none; width: 498px; box-sizing: border-box; }
.status span + span { border-left: 1px solid #a0a0a0; }
.status span:first-child { width: 993px; }

.highlight {
  position: absolute;
  top: 28px;
  right: 62px;
  left: 545px;
  height: 84px;
  border: 6px solid #b4145f;
  pointer-events: none;
}
</style>
